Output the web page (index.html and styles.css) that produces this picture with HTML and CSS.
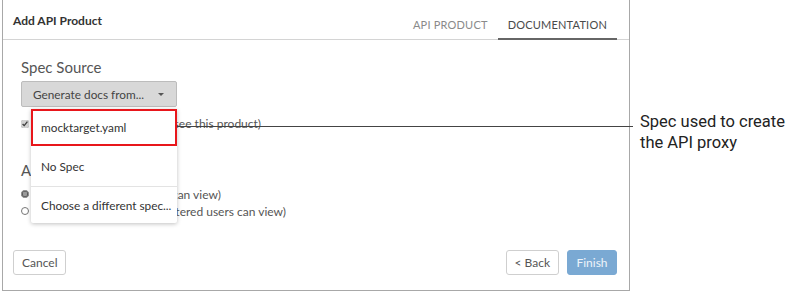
FILE: index.html
```html
<!DOCTYPE html>
<html lang="en">
<head>
  <meta charset="UTF-8">
  <title>Add API Product</title>
  <link rel="stylesheet" href="styles.css">
</head>
<body>
  <div class="page">
    <div class="dialog">
      <div class="dialog-head">
        <div class="dialog-title">Add API Product</div>
        <div class="tabs">
          <div class="tab">API PRODUCT</div>
          <div class="tab active">DOCUMENTATION</div>
        </div>
      </div>

      <div class="dialog-body">
        <div class="section-title">Spec Source</div>
        <div class="picker">
          <div class="picker-btn">
            <span>Generate docs from...</span>
            <span class="caret"></span>
          </div>
          <!-- open menu lies over the form -->
          <div class="menu">
            <div class="menu-item selected">mocktarget.yaml</div>
            <div class="menu-item">No Spec</div>
            <div class="menu-item sep">Choose a different spec...</div>
          </div>
        </div>
        <label class="check-row"><input type="checkbox" checked> Published (other users can see this product)</label>

        <div class="section-title audience">Audience</div>
        <label class="radio-row"><input type="radio" name="aud" checked> Public (anonymous guests can view)</label>
        <label class="radio-row"><input type="radio" name="aud"> Registered users (only registered users can view)</label>
      </div>

      <div class="dialog-foot">
        <button class="btn">Cancel</button>
        <div class="foot-right">
          <button class="btn">&lt; Back</button>
          <button class="btn primary">Finish</button>
        </div>
      </div>
    </div>

    <div class="note">Spec used to create<br>the API proxy</div>
    <div class="note-line"></div>
  </div>
</body>
</html>
```

FILE: styles.css
```css
body {margin:0; background:#fff; font-family:Lato, "Open Sans", sans-serif; color:#555;}
.page {position:relative; display:flex; height:293px;}

.dialog {width:628px; height:291px; margin-left:2px; border:1px solid #a8a8a8; border-top:none; display:flex; flex-direction:column; box-sizing:border-box;}

.dialog-head {display:flex; justify-content:space-between; align-items:flex-end; height:39px; border-bottom:1px solid #d4d4d4; padding:0 12px 0 10px;}
.dialog-title {font-size:12px; font-weight:bold; color:#333; align-self:center; margin-top:1px;}
.tabs {display:flex;}
.tab {font-size:11px; color:#8a8a8a; padding:0 10px 7px; letter-spacing:0.2px; border-bottom:2px solid transparent; margin-bottom:-1px;}
.tab.active {color:#4a4a4a; border-bottom-color:#666;}

.dialog-body {flex:1; padding:18px 18px 0;}
.section-title {font-size:15px; color:#555; line-height:18px;}

.picker {position:relative; width:156px; margin-top:5px;}
.picker-btn {display:flex; justify-content:space-between; align-items:center; height:26px; box-sizing:border-box; padding:0 10px 0 11px; background:#d8d8d8; border:1px solid #bcbcbc; border-radius:2px; font-size:11.8px; color:#444;}
.caret {width:0; height:0; border-left:3px solid transparent; border-right:3px solid transparent; border-top:3px solid #555; margin-right:2px;}

.menu {position:absolute; left:10px; top:28px; width:146px; background:#fff; box-shadow:0 1px 4px rgba(0,0,0,0.25); border-radius:0 0 2px 2px; z-index:3;}
.menu-item {height:38px; display:flex; align-items:center; padding-left:10px; font-size:11.8px; color:#333; box-sizing:border-box; white-space:nowrap;}
.menu-item.selected {height:37px; border:2px solid #e8161b; padding-left:8px;}
.menu-item:nth-child(2) {height:40px;}
.menu-item.sep {border-top:1px solid #e3e3e3; height:37px;}

.check-row, .radio-row {display:flex; align-items:center; font-size:12px; color:#555; gap:4px; white-space:nowrap;}
.check-row {margin-top:9px;}
.check-row input, .radio-row input {margin:0; width:8px; height:8px;}
.check-row input {accent-color:#d2d2d2;}
.radio-row input {accent-color:#9a9a9a;}
.section-title.audience {margin-top:30px;}
.radio-row {margin-top:9px; height:12px;}
.radio-row + .radio-row {margin-top:5px;}

.dialog-foot {display:flex; justify-content:space-between; padding:0 12px 15px 10px;}
.foot-right {display:flex; gap:8px;}
.btn {height:25px; padding:0 8px; font-family:Lato, sans-serif; font-size:12px; color:#555; background:#fff; border:1px solid #cfcfcf; border-radius:3px;}
.btn.primary {background:#7aa9d3; border-color:#7aa9d3; color:#eef4fa; padding:0 8px; width:50px;}

.note {margin:111px 0 0 10px; font-family:Roboto, sans-serif; font-size:16.5px; line-height:21px; color:#222;}
.note-line {position:absolute; left:177px; top:126px; width:456px; height:1px; background:#444; z-index:2;}
```
